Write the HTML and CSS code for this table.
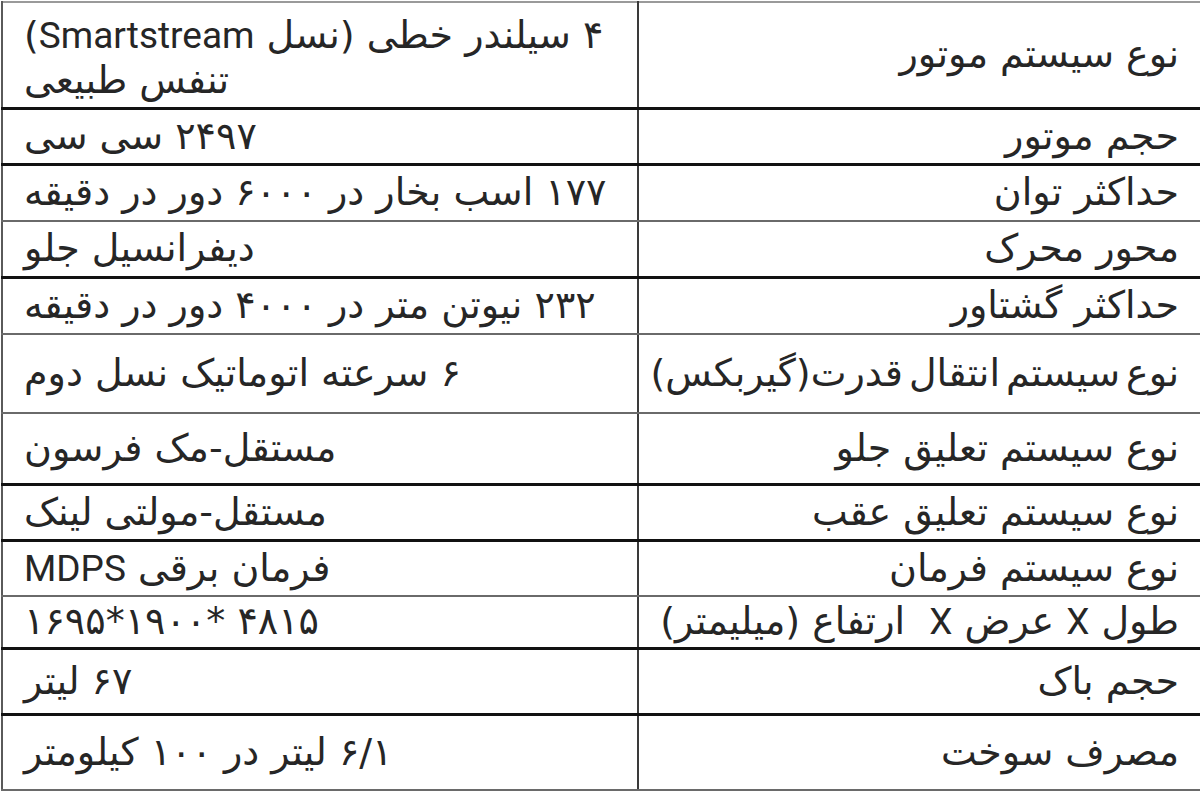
FILE: index.html
```html
<!DOCTYPE html>
<html lang="fa">
<head>
<meta charset="utf-8">
<link rel="stylesheet" href="styles.css">
</head>
<body>
<table class="spec" dir="rtl">
  <colgroup><col class="c-label"><col class="c-value"></colgroup>
  <tr class="r1 dark"><td class="label">نوع سیستم موتور</td><td class="value"><span class="line">۴ سیلندر خطی (نسل <span class="lat">Smartstream</span>)</span><span class="line">تنفس طبیعی</span></td></tr>
  <tr class="r2 dark"><td class="label">حجم موتور</td><td class="value">۲۴۹۷ سی سی</td></tr>
  <tr class="r3 gray"><td class="label">حداکثر توان</td><td class="value">۱۷۷ اسب بخار در ۶۰۰۰ دور در دقیقه</td></tr>
  <tr class="r4 dark"><td class="label">محور محرک</td><td class="value">دیفرانسیل جلو</td></tr>
  <tr class="r5 gray"><td class="label">حداکثر گشتاور</td><td class="value">۲۳۲ نیوتن متر در ۴۰۰۰ دور در دقیقه</td></tr>
  <tr class="r6 gray"><td class="label tight">نوع سیستم انتقال قدرت(گیربکس)</td><td class="value">۶ سرعته اتوماتیک نسل دوم</td></tr>
  <tr class="r7 dark"><td class="label">نوع سیستم تعلیق جلو</td><td class="value">مستقل-مک فرسون</td></tr>
  <tr class="r8 dark"><td class="label">نوع سیستم تعلیق عقب</td><td class="value">مستقل-مولتی لینک</td></tr>
  <tr class="r9 gray"><td class="label">نوع سیستم فرمان</td><td class="value">فرمان برقی <span class="lat">MDPS</span></td></tr>
  <tr class="r10 dark"><td class="label">طول <span class="lat">X</span> عرض <span class="lat">X</span>&nbsp; ارتفاع (میلیمتر)</td><td class="value">۴۸۱۵ *۱۹۰۰*۱۶۹۵</td></tr>
  <tr class="r11 dark"><td class="label">حجم باک</td><td class="value">۶۷ لیتر</td></tr>
  <tr class="r12 gray"><td class="label">مصرف سوخت</td><td class="value">۶/۱ لیتر در ۱۰۰ کیلومتر</td></tr>
</table>
</body>
</html>
```

FILE: styles.css
```css
html, body {
  margin: 0;
  padding: 0;
  background: #ffffff;
  overflow: hidden;
}

.spec {
  margin: 1px 0 0 1px;
  width: 1212px;
  border-collapse: collapse;
  table-layout: fixed;
  font-family: "DejaVu Sans", "Roboto", sans-serif;
  font-size: 38px;
  color: #262626;
}

.c-label { width: 576px; }
.c-value { width: 636px; }

.spec td {
  padding: 0;
  vertical-align: middle;
  line-height: 45px;
}

.spec .label {
  text-align: right;
  padding-right: 35px;
  border-left: 2px solid #3a3a3a;
}

.spec .value {
  text-align: left;
  padding-left: 21px;
  padding-right: 24px;
  border-left: 2px solid #5a5a5a;
}

.line {
  display: block;
}

.lat {
  font-family: "Roboto", "Liberation Sans", sans-serif;
  font-size: 37px;
  line-height: 1;
}

.spec tr.dark td { border-bottom: 3px solid #111; }
.spec tr.gray td { border-bottom: 2px solid #6a6a6a; }
.spec tr.r1 td { border-top: 2px solid #9a9a9a; }
.spec tr.r1 td.value { vertical-align: top; padding-top: 10px; }

.r1 { height: 106px; }
.r2 { height: 56px; }
.r3 { height: 57px; }
.r4 { height: 56px; }
.r5 { height: 57px; }
.r6 { height: 79px; }
.r7 { height: 71px; }
.r8 { height: 56px; }
.r9 { height: 56px; }
.r10 { height: 52px; }
.r11 { height: 66px; }
.r12 { height: 76px; }

.tight { letter-spacing: -1px; word-spacing: -6px; }
```
